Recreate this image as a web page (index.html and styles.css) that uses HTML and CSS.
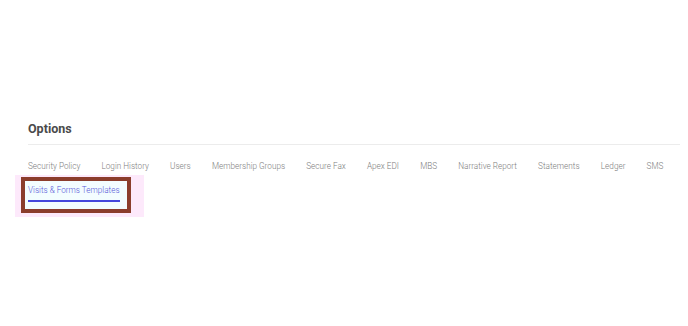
FILE: index.html
```html
<!DOCTYPE html>
<html lang="en">
<head>
<meta charset="utf-8">
<title>Options</title>
<link rel="stylesheet" href="styles.css">
</head>
<body>
<main class="page">
  <h2 class="title">Options</h2>
  <nav class="tabs">
    <div class="tab">Security Policy</div>
    <div class="tab">Login History</div>
    <div class="tab">Users</div>
    <div class="tab">Membership Groups</div>
    <div class="tab">Secure Fax</div>
    <div class="tab">Apex EDI</div>
    <div class="tab">MBS</div>
    <div class="tab">Narrative Report</div>
    <div class="tab">Statements</div>
    <div class="tab">Ledger</div>
    <div class="tab">SMS</div>
    <div class="tab active"><span class="tab-label">Visits &amp; Forms Templates</span></div>
  </nav>
</main>
</body>
</html>
```
FILE: styles.css
```css
html, body {
  margin: 0;
  padding: 0;
  background: #ffffff;
}
body {
  font-family: Roboto, "Liberation Sans", Arial, sans-serif;
  width: 688px;
  height: 326px;
  overflow: hidden;
}
.page {
  padding: 121px 8px 0 28px;
}
.title {
  margin: 0;
  font-size: 12.5px;
  line-height: 16px;
  font-weight: 700;
  color: #4a4a4a;
  padding-bottom: 7px;
  border-bottom: 1px solid #ececec;
}
.tabs {
  margin-top: 9px;
  display: flex;
  flex-wrap: wrap;
  column-gap: 21.15px;
  row-gap: 0;
}
.tab {
  font-size: 8.2px;
  line-height: 12px;
  padding: 6px 0;
  font-weight: 300;
  color: #7e7e7e;
  white-space: nowrap;
}
.tab.active {
  position: relative;
  z-index: 0;
  color: #5656d8;
  padding-bottom: 0;
}
.tab.active::before {
  content: "";
  position: absolute;
  left: -13px;
  top: -3px;
  width: 129px;
  height: 42px;
  background: #fde9fb;
  z-index: -2;
}
.tab.active::after {
  content: "";
  position: absolute;
  left: -7px;
  top: -1px;
  width: 110px;
  height: 36px;
  box-sizing: border-box;
  border: 4px solid #8b3d2c;
  background: #f3fdff;
  z-index: -1;
}
.tab-label {
  display: inline-block;
  padding-bottom: 3.5px;
  border-bottom: 2px solid #4447dc;
}
```
